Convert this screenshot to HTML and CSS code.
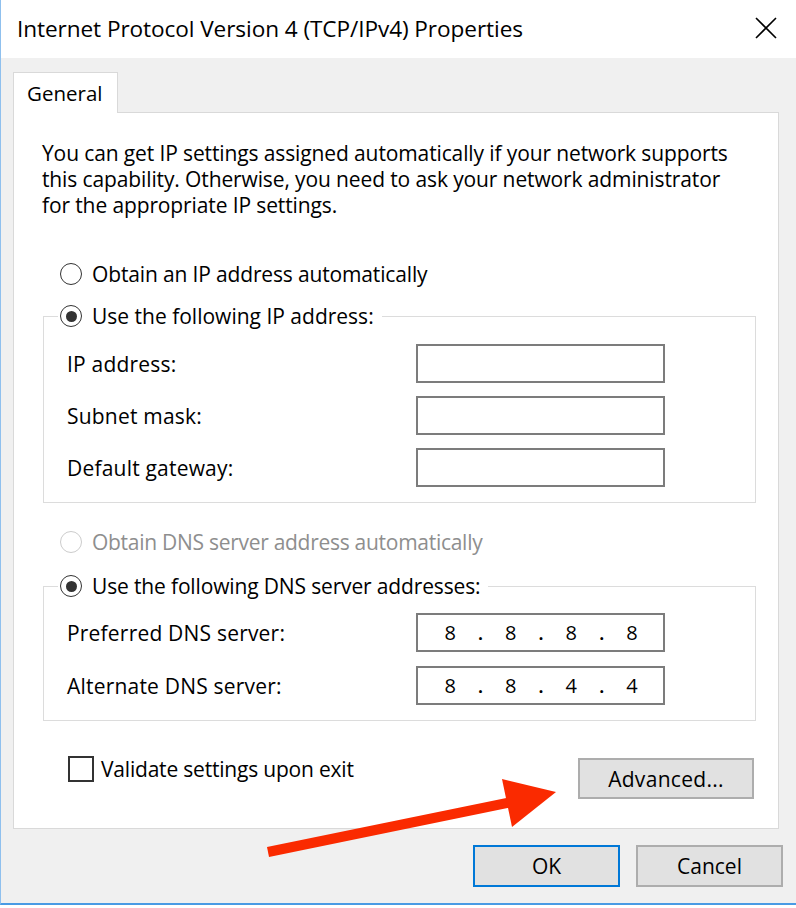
FILE: index.html
```html
<!DOCTYPE html>
<html>
<head>
<meta charset="utf-8">
<link rel="stylesheet" href="styles.css">
</head>
<body>
<div class="window">
  <div class="titlebar">
    <span class="title">Internet Protocol Version 4 (TCP/IPv4) Properties</span>
    <svg class="close" width="22" height="22" viewBox="0 0 22 22"><path d="M1 1 L21 21 M21 1 L1 21" stroke="#000" stroke-width="1.6" fill="none"/></svg>
  </div>
  <div class="client">
    <div class="tabs"><div class="tab">General</div></div>
    <div class="panel">
      <p class="desc">You can get IP settings assigned automatically if your network supports<br>this capability. Otherwise, you need to ask your network administrator<br>for the appropriate IP settings.</p>

      <div class="radio-row first"><span class="radio"></span><span>Obtain an IP address automatically</span></div>
      <fieldset class="group">
        <legend><span class="radio checked"></span><span>Use the following IP address:</span></legend>
        <div class="fields">
          <span class="lbl">IP address:</span><span class="ipbox"></span>
          <span class="lbl">Subnet mask:</span><span class="ipbox"></span>
          <span class="lbl">Default gateway:</span><span class="ipbox"></span>
        </div>
      </fieldset>

      <div class="radio-row disabled"><span class="radio"></span><span>Obtain DNS server address automatically</span></div>
      <fieldset class="group second">
        <legend><span class="radio checked"></span><span class="tight">Use the following DNS server addresses:</span></legend>
        <div class="fields dns">
          <span class="lbl">Preferred DNS server:</span>
          <span class="ipbox"><span class="oct">8</span><span class="dot">.</span><span class="oct">8</span><span class="dot">.</span><span class="oct">8</span><span class="dot">.</span><span class="oct">8</span></span>
          <span class="lbl">Alternate DNS server:</span>
          <span class="ipbox"><span class="oct">8</span><span class="dot">.</span><span class="oct">8</span><span class="dot">.</span><span class="oct">4</span><span class="dot">.</span><span class="oct">4</span></span>
        </div>
      </fieldset>

      <div class="bottom-row">
        <label class="check"><span class="box"></span><span>Validate settings upon exit</span></label>
        <button class="btn adv">Advanced...</button>
      </div>
    </div>
    <div class="actions">
      <button class="btn ok">OK</button>
      <button class="btn">Cancel</button>
    </div>
  </div>
  <svg class="arrow" width="796" height="908" viewBox="0 0 796 908">
    <line x1="268" y1="852" x2="512" y2="802" stroke="#fa2a00" stroke-width="10"/>
    <polygon points="502,779 556,792 512,827" fill="#fa2a00"/>
  </svg>
</div>
</body>
</html>
```

FILE: styles.css
```css
* { box-sizing: border-box; }
html, body { margin: 0; padding: 0; background: #fff; }
body {
  font-family: "Open Sans", "Segoe UI", "Noto Sans", sans-serif;
  font-size: 21px;
  color: #000;
}
.window {
  position: relative;
  width: 796px;
  height: 905px;
  border-left: 1px solid #8fc0ee;
  border-bottom: 2px solid #4a9be4;
  overflow: hidden;
}
.titlebar {
  height: 58px;
  background: #fff;
  display: flex;
  align-items: center;
  justify-content: space-between;
  padding: 0 19px 0 16px;
}
.title { font-size: 22.6px; letter-spacing: -0.08px; margin-top: -1px; }
.close { margin-top: -2px; }
.client {
  background: #f0f0f0;
  padding: 14px 0 16px 12px;
  height: 845px;
}
.tabs { display: flex; }
.tab {
  position: relative;
  z-index: 1;
  width: 105px;
  height: 41px;
  margin-bottom: -1px;
  background: #fff;
  border: 1px solid #d9d9d9;
  border-bottom: none;
  padding: 5px 0 0 13px;
  line-height: 30px;
  font-size: 20.5px;
}
.panel {
  width: 766px;
  height: 717px;
  background: #fff;
  border: 1px solid #d9d9d9;
  padding: 27px 22px 0 29px;
}
.desc {
  margin: 0 0 0 -1px;
  line-height: 26px;
  letter-spacing: -0.12px;
}
.radio-row, legend {
  display: flex;
  align-items: center;
  height: 30px;
  line-height: 30px;
  gap: 10px;
}
.radio-row { margin-left: 17px; }
.radio-row.first { margin-top: 41px; }
.radio-row.first span:last-child { letter-spacing: -0.15px; }
.tight { letter-spacing: -0.15px; }
.radio {
  width: 22px;
  height: 22px;
  border: 1.6px solid #333;
  border-radius: 50%;
  display: inline-flex;
  align-items: center;
  justify-content: center;
  flex: none;
  background: #fff;
}
.radio.checked::after {
  content: "";
  width: 11px;
  height: 11px;
  border-radius: 50%;
  background: #333;
}
.disabled { color: #8e8e8e; margin-top: 24px; letter-spacing: -0.28px; }
.disabled .radio { border-color: #cccccc; }
.group {
  margin: 12px 0 0 0;
  padding: 0 0 15px 23px;
  border: 1.5px solid #dcdcdc;
  min-width: 0;
}
.group.second { margin-top: 14px; }
legend {
  padding: 0 8px 0 2px;
  margin-left: -9px;
}
.fields {
  display: grid;
  grid-template-columns: 349px 249px;
  row-gap: 13px;
  padding-top: 13px;
  align-items: center;
}
.fields.dns { row-gap: 14px; padding-top: 12px; }
.lbl { letter-spacing: 0.2px; }
.ipbox {
  height: 39px;
  border: 2px solid #7c7c7c;
  background: #fff;
  display: flex;
  align-items: center;
  padding-left: 17px;
  font-size: 20px;
}
.oct, .dot { width: 30.3px; text-align: center; }
.dot { font-weight: 600; }
.bottom-row {
  display: flex;
  justify-content: space-between;
  align-items: flex-start;
  margin-top: 35px;
}
.check {
  display: flex;
  align-items: center;
  gap: 7px;
  margin-left: 25px;
  height: 26px;
  letter-spacing: -0.2px;
}
.box {
  width: 26px;
  height: 26px;
  border: 2px solid #333;
  background: #fff;
}
.btn {
  font-family: inherit;
  font-size: 21px;
  color: #000;
  background: #e1e1e1;
  border: 2px solid #adadad;
  padding: 0;
}
.adv {
  width: 176px;
  height: 41px;
  margin-top: 2px;
  margin-right: 2px;
  letter-spacing: 0.3px;
}
.actions {
  display: flex;
  justify-content: flex-end;
  gap: 16px;
  padding-right: 13px;
  margin-top: 16px;
}
.actions .btn { width: 147px; height: 42px; }
.btn.ok { border-color: #0078d7; }
.arrow {
  position: absolute;
  left: -1px;
  top: 0;
  pointer-events: none;
}
```
